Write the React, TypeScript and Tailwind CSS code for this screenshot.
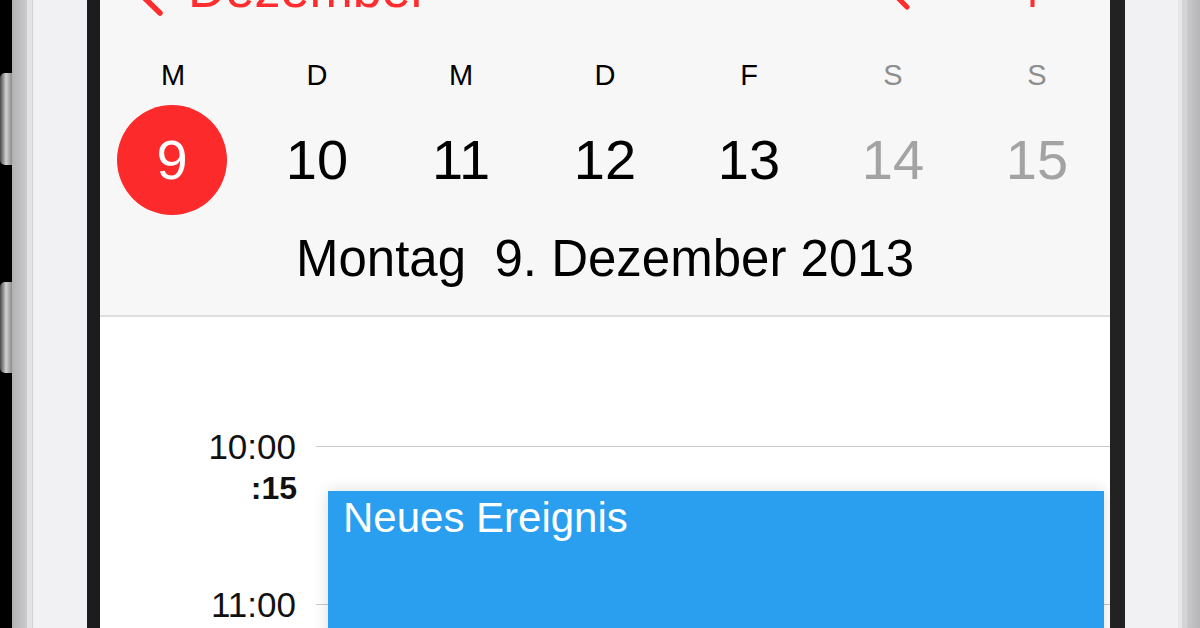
export default function App() {
  const days = [
    { l: 'M', n: '9', sel: true, we: false },
    { l: 'D', n: '10', sel: false, we: false },
    { l: 'M', n: '11', sel: false, we: false },
    { l: 'D', n: '12', sel: false, we: false },
    { l: 'F', n: '13', sel: false, we: false },
    { l: 'S', n: '14', sel: false, we: true },
    { l: 'S', n: '15', sel: false, we: true },
  ];
  return (
    <div className="w-[1200px] h-[628px] overflow-hidden flex bg-black font-['Liberation_Sans',Arial,sans-serif]">
      {/* left edge with buttons */}
      <div className="w-[12px] shrink-0 bg-black flex flex-col pt-[73px]">
        <div className="h-[92px] w-[12px] rounded-l-[5px] bg-linear-to-r from-[#4a4a4a] via-[#d2d2d2] to-[#8c8c8c]" />
        <div className="mt-[117px] h-[91px] w-[12px] rounded-l-[5px] bg-linear-to-r from-[#4a4a4a] via-[#d2d2d2] to-[#8c8c8c]" />
      </div>
      <div className="w-[15px] shrink-0 bg-linear-to-r from-[#b2b2b4] to-[#cbcbcd]" />
      <div className="w-[5px] shrink-0 bg-[#e4e4e6]" />
      <div className="w-px shrink-0 bg-[#d2d2d4]" />
      <div className="w-[54px] shrink-0 bg-[#f1f1f3]" />
      <div className="w-[13px] shrink-0 bg-[#1c1c1c]" />

      {/* screen */}
      <div className="w-[1010px] shrink-0 flex flex-col overflow-hidden bg-white">
        <div className="h-[317px] shrink-0 bg-[#f7f7f7] border-b-2 border-[#dedede] flex flex-col">
          {/* nav row (cut at top) */}
          <div className="-mt-[37px] h-[56px] shrink-0 flex items-start">
            <svg className="ml-[15px] shrink-0" width="55" height="56" viewBox="0 0 55 56">
              <path d="M45 -17 L11 17 L45 50" fill="none" stroke="#ff2d2d" strokeWidth="5.5" strokeLinecap="round" strokeLinejoin="round" />
            </svg>
            <div className="ml-[18px] text-[52px] leading-none text-[#ff2d2d] whitespace-nowrap">Dezember</div>
            <div className="flex-1" />
            <svg className="shrink-0" width="45" height="56" viewBox="0 0 45 56">
              <circle cx="16" cy="16" r="13" fill="none" stroke="#ff2d2d" strokeWidth="4.5" />
              <path d="M26 33 L37 44" stroke="#ff2d2d" strokeWidth="5" strokeLinecap="round" />
            </svg>
            <svg className="ml-[95px] mr-[55px] shrink-0" width="45" height="56" viewBox="0 0 45 56">
              <path d="M22.5 0 L22.5 44 M0 22 L45 22" stroke="#ff2d2d" strokeWidth="4" />
            </svg>
          </div>

          {/* weekday letters */}
          <div className="mt-[42px] ml-px w-[1008px] grid grid-cols-7">
            {days.map((d, i) => (
              <div
                key={i}
                className={`text-center text-[29px] leading-none ${d.we ? 'text-[#8e8e8e]' : 'text-black'}`}
              >
                {d.l}
              </div>
            ))}
          </div>

          {/* day numbers */}
          <div className="mt-[15px] ml-px w-[1008px] h-[110px] grid grid-cols-7">
            {days.map((d, i) => (
              <div key={i} className="flex items-center justify-center">
                {d.sel ? (
                  <div className="-ml-[2px] w-[110px] h-[110px] rounded-full bg-[#fc2a2a] text-white flex items-center justify-center text-[56px] leading-none">
                    {d.n}
                  </div>
                ) : (
                  <div className={`text-[56px] leading-none ${d.we ? 'text-[#a3a3a3]' : 'text-black'}`}>{d.n}</div>
                )}
              </div>
            ))}
          </div>

          {/* full date */}
          <div className="mt-[18px] text-center text-[51px] leading-none text-black whitespace-pre">
            {'Montag  9. Dezember 2013'}
          </div>
        </div>

        {/* timeline */}
        <div className="flex-1 relative bg-white pt-[109px]">
          <div className="h-[40px] flex items-center">
            <div className="w-[196px] shrink-0 text-right text-[35px] leading-none text-[#111]">10:00</div>
            <div className="ml-[20px] flex-1 h-px bg-[#c8c8c8]" />
          </div>
          <div className="mt-[6px] w-[197px] text-right text-[32px] font-bold leading-none text-[#111]">:15</div>
          <div className="mt-[80px] h-[40px] flex items-center">
            <div className="w-[196px] shrink-0 text-right text-[35px] leading-none text-[#111]">11:00</div>
            <div className="ml-[20px] flex-1 h-px bg-[#c8c8c8]" />
          </div>

          {/* dragged event */}
          <div className="absolute top-[174px] left-[228px] right-[6px] h-[300px] bg-[#2a9ff0] shadow-[0_0_14px_rgba(0,0,0,0.14)] pl-[15px] pt-[6px]">
            <div className="text-[42px] leading-none text-white">Neues Ereignis</div>
          </div>
        </div>
      </div>

      {/* right edge */}
      <div className="w-[15px] shrink-0 bg-[#222222]" />
      <div className="w-[53px] shrink-0 bg-[#f1f1f3]" />
      <div className="w-[4px] shrink-0 bg-[#e6e6e8]" />
      <div className="w-[5px] shrink-0 bg-[#d4d4d6]" />
      <div className="w-[13px] shrink-0 bg-linear-to-r from-[#c9c9cb] to-[#b6b6b8]" />
    </div>
  );
}
